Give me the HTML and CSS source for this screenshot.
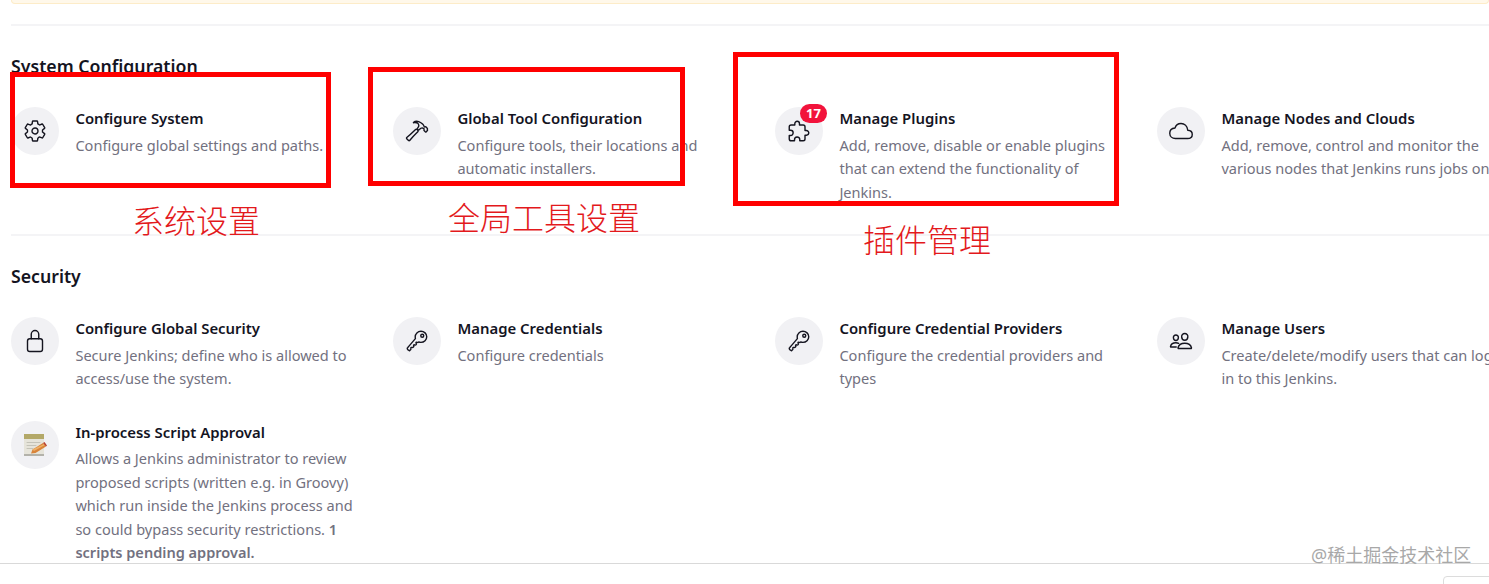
FILE: index.html
```html
<!DOCTYPE html>
<html lang="en">
<head>
    <meta charset="UTF-8">
    <meta name="viewport" content="width=device-width, initial-scale=1.0">
    <title>Manage Jenkins</title>
    <link rel="stylesheet" href="styles.css">
</head>
<body>
    <main class="page">
        <div class="notice"></div>

        <section class="section">
            <h2 class="section-title">System Configuration</h2>
            <div class="tools">
                <a class="tool">
                    <span class="tool-icon">
                        <svg viewBox="0 0 512 512"><path d="M262.29 192.31a64 64 0 1057.4 57.4 64.13 64.13 0 00-57.4-57.4zM416.39 256a154.34 154.34 0 01-1.53 20.79l45.21 35.46a10.81 10.81 0 012.45 13.75l-42.77 74a10.81 10.81 0 01-13.14 4.59l-44.9-18.08a16.11 16.11 0 00-15.17 1.75A164.48 164.48 0 01325 400.8a15.94 15.94 0 00-8.82 12.14l-6.73 47.89a11.08 11.08 0 01-10.68 9.17h-85.54a11.11 11.11 0 01-10.69-8.87l-6.72-47.82a16.07 16.07 0 00-9-12.22 155.3 155.3 0 01-21.46-12.57 16 16 0 00-15.11-1.71l-44.89 18.07a10.81 10.81 0 01-13.14-4.58l-42.77-74a10.8 10.8 0 012.45-13.75l38.21-30a16.05 16.05 0 006-14.08c-.36-4.17-.58-8.33-.58-12.5s.21-8.27.58-12.35a16 16 0 00-6.07-13.94l-38.19-30A10.81 10.81 0 0149.48 186l42.77-74a10.81 10.81 0 0113.14-4.59l44.9 18.08a16.11 16.11 0 0015.17-1.75A164.48 164.48 0 01187 111.2a15.94 15.94 0 008.82-12.14l6.73-47.89A11.08 11.08 0 01213.23 42h85.54a11.11 11.11 0 0110.69 8.87l6.72 47.82a16.07 16.07 0 009 12.22 155.3 155.3 0 0121.46 12.57 16 16 0 0015.11 1.71l44.89-18.07a10.81 10.81 0 0113.14 4.58l42.77 74a10.8 10.8 0 01-2.45 13.75l-38.21 30a16.05 16.05 0 00-6.05 14.08c.33 4.14.55 8.3.55 12.47z"/></svg>
                    </span>
                    <div class="tool-text">
                        <div class="tool-name">Configure System</div>
                        <div class="tool-desc">Configure global settings and paths.</div>
                    </div>
                </a>
                <a class="tool">
                    <span class="tool-icon">
                        <svg viewBox="0 0 512 512"><path d="M277.42 247a24.68 24.68 0 00-4.08-5.47L255 223.44a21.63 21.63 0 00-6.56-4.57 20.93 20.93 0 00-23.28 4.27c-6.36 6.26-18 17.68-39 38.43C146 301.3 71.43 367.89 37.71 396.29a16 16 0 00-1.09 23.54l39 39.43a16.13 16.13 0 0023.67-.89c29.24-34.37 96.3-109 136-148.23 20.39-20.06 31.82-31.58 38.29-37.94a21.76 21.76 0 003.84-25.73z"/><path d="M478 201l-34-34c-3-3-8-3-11 0-4 4-10 5-16 2-12-6-12-24-19-33a243 243 0 00-23-27c-7-7-35-33-82-52a124 124 0 00-47-10c-26 0-47 12-54 19-6 5-12 14-12 14 18-7 32-8 34-5 28 2 47 9 57 17 16 13 23 30 24 53 1 17-15 38-30 55a8 8 0 000 11l21 21a8 8 0 0011 0c14-14 31-28 41-34s18-8 21-8c8-1 15 1 22 5 7 6 16 8 23 14 5 5 5 13 0 20l-1 5c-1 4 1 8 4 11l31 31c3 3 8 3 11 0l29-29c3-3 3-8 0-11z"/></svg>
                    </span>
                    <div class="tool-text">
                        <div class="tool-name">Global Tool Configuration</div>
                        <div class="tool-desc">Configure tools, their locations and automatic installers.</div>
                    </div>
                </a>
                <a class="tool">
                    <span class="tool-icon">
                        <svg viewBox="0 0 512 512"><path d="M413.66 246.1H386a2 2 0 01-2-2v-77.24A38.86 38.86 0 00345.14 128H267.9a2 2 0 01-2-2V98.34c0-27.14-21.5-49.86-48.64-50.33a49.53 49.53 0 00-50.4 49.51V126a2 2 0 01-2 2H87.62A39.74 39.74 0 0048 167.62V238a2 2 0 002 2h26.91c29.37 0 53.68 25.48 54.09 54.85.42 29.87-23.51 57.15-53.29 57.15H50a2 2 0 00-2 2v70.38A39.74 39.74 0 0087.62 464H158a2 2 0 002-2v-20.93c0-30.28 24.75-56.35 55-57.06 30.1-.7 57 20.31 57 50.28V462a2 2 0 002 2h71.14A38.86 38.86 0 00384 425.14v-78a2 2 0 012-2h28.48c27.63 0 49.52-22.67 49.52-50.4s-23.2-48.64-50.34-48.64z"/></svg>
                        <span class="badge">17</span>
                    </span>
                    <div class="tool-text">
                        <div class="tool-name">Manage Plugins</div>
                        <div class="tool-desc">Add, remove, disable or enable plugins that can extend the functionality of Jenkins.</div>
                    </div>
                </a>
                <a class="tool">
                    <span class="tool-icon">
                        <svg viewBox="0 0 512 512"><path d="M400 240c-8.89-89.54-71-144-144-144-69 0-113.44 48.2-128 96-60 6-112 43.59-112 112 0 66 54 112 120 112h260c55 0 100-27.44 100-88 0-59.82-53-85.76-96-88z"/></svg>
                    </span>
                    <div class="tool-text">
                        <div class="tool-name">Manage Nodes and Clouds</div>
                        <div class="tool-desc">Add, remove, control and monitor the various nodes that Jenkins runs jobs on.</div>
                    </div>
                </a>
            </div>
        </section>

        <section class="section">
            <h2 class="section-title">Security</h2>
            <div class="tools">
                <a class="tool">
                    <span class="tool-icon">
                        <svg viewBox="0 0 512 512"><path d="M336 208v-95a80 80 0 00-160 0v95"/><rect x="96" y="208" width="320" height="272" rx="48" ry="48"/></svg>
                    </span>
                    <div class="tool-text">
                        <div class="tool-name">Configure Global Security</div>
                        <div class="tool-desc">Secure Jenkins; define who is allowed to access/use the system.</div>
                    </div>
                </a>
                <a class="tool">
                    <span class="tool-icon">
                        <svg viewBox="0 0 512 512"><path d="M218.1 167.17c0 13 0 25.6 4.1 37.4-43.1 50.6-156.9 184.3-167.5 194.5a20.17 20.17 0 00-6.7 15c0 8.5 5.2 16.7 9.6 21.3 6.6 6.9 34.8 33 40 28 15.4-15 18.5-19 24.8-25.2 9.5-9.3-1-28.3 2.3-36s6.8-9.2 12.5-10.4 15.8 2.9 23.7 3c8.3.1 12.8-3.4 19-9.2 5-4.6 8.6-8.9 8.7-15.6.2-9-12.8-20.9-3.1-30.4s23.7 6.2 34 5 22.8-15.5 24.1-21.6-11.7-21.8-9.7-30.7c.7-3 6.8-10 11.4-11s25 6.9 29.6 5.9c5.6-1.2 12.1-7.1 17.4-10.4 15.5 6.7 29.6 9.4 47.7 9.4 68.5 0 124-53.4 124-119.2S408.5 48 340 48s-121.9 53.37-121.9 119.17zM400 144a32 32 0 11-32-32 32 32 0 0132 32z"/></svg>
                    </span>
                    <div class="tool-text">
                        <div class="tool-name">Manage Credentials</div>
                        <div class="tool-desc">Configure credentials</div>
                    </div>
                </a>
                <a class="tool">
                    <span class="tool-icon">
                        <svg viewBox="0 0 512 512"><path d="M218.1 167.17c0 13 0 25.6 4.1 37.4-43.1 50.6-156.9 184.3-167.5 194.5a20.17 20.17 0 00-6.7 15c0 8.5 5.2 16.7 9.6 21.3 6.6 6.9 34.8 33 40 28 15.4-15 18.5-19 24.8-25.2 9.5-9.3-1-28.3 2.3-36s6.8-9.2 12.5-10.4 15.8 2.9 23.7 3c8.3.1 12.8-3.4 19-9.2 5-4.6 8.6-8.9 8.7-15.6.2-9-12.8-20.9-3.1-30.4s23.7 6.2 34 5 22.8-15.5 24.1-21.6-11.7-21.8-9.7-30.7c.7-3 6.8-10 11.4-11s25 6.9 29.6 5.9c5.6-1.2 12.1-7.1 17.4-10.4 15.5 6.7 29.6 9.4 47.7 9.4 68.5 0 124-53.4 124-119.2S408.5 48 340 48s-121.9 53.37-121.9 119.17zM400 144a32 32 0 11-32-32 32 32 0 0132 32z"/></svg>
                    </span>
                    <div class="tool-text">
                        <div class="tool-name">Configure Credential Providers</div>
                        <div class="tool-desc">Configure the credential providers and types</div>
                    </div>
                </a>
                <a class="tool">
                    <span class="tool-icon">
                        <svg viewBox="0 0 512 512"><path d="M402 168c-2.93 40.67-33.1 72-66 72s-63.12-31.32-66-72c-3-42.31 26.37-72 66-72s69 30.46 66 72z"/><path d="M336 304c-65.17 0-127.84 32.37-143.54 95.41-2.08 8.34 3.15 16.59 11.72 16.59h263.65c8.57 0 13.77-8.25 11.72-16.59C463.85 335.36 401.18 304 336 304z"/><path d="M200 185.94c-2.34 32.48-26.72 58.06-53 58.06s-50.7-25.57-53-58.06C91.61 152.15 115.34 128 147 128s55.39 24.77 53 57.94z"/><path d="M206 306c-18.05-8.27-37.93-11.45-59-11.45-52 0-102.1 25.85-114.65 76.2-1.65 6.66 2.53 13.25 9.37 13.25H154"/></svg>
                    </span>
                    <div class="tool-text">
                        <div class="tool-name">Manage Users</div>
                        <div class="tool-desc">Create/delete/modify users that can log in to this Jenkins.</div>
                    </div>
                </a>
                <a class="tool">
                    <span class="tool-icon">
                        <svg class="notepad" viewBox="0 0 24 24">
                            <rect x="1" y="3" width="20" height="20" fill="#e6e4da"/>
                            <rect x="1" y="21" width="20" height="2" fill="#b3b2aa"/>
                            <rect x="1" y="1" width="20" height="5" fill="#b3a868"/>
                            <path d="M4 9.500h13M4 12.500h9M4 15.500h6" stroke="#c4c3b8" stroke-width="1"/>
                            <path d="M8 20.500l1.500-4L20 10l3 3.500-10.500 6.500z" fill="#d9843a"/>
                            <path d="M9.500 16.500L21 11l1 1-11 6z" fill="#eeb066"/>
                            <path d="M20 10l3 3.500 1-1-2.500-3.500z" fill="#b8402c"/>
                        </svg>
                    </span>
                    <div class="tool-text">
                        <div class="tool-name">In-process Script Approval</div>
                        <div class="tool-desc">Allows a Jenkins administrator to review proposed scripts (written e.g. in Groovy) which run inside the Jenkins process and so could bypass security restrictions. <b>1 scripts pending approval.</b></div>
                    </div>
                </a>
            </div>
        </section>
    </main>

    <footer class="footer"><span class="footer-btn"></span></footer>

    <!-- red annotations drawn over the screenshot -->
    <div class="mark mark-system"></div>
    <div class="mark mark-tools"></div>
    <div class="mark mark-plugins"></div>
    <div class="note note-system">系统设置</div>
    <div class="note note-tools">全局工具设置</div>
    <div class="note note-plugins">插件管理</div>
    <div class="watermark">@稀土掘金技术社区</div>
</body>
</html>
```

FILE: styles.css
```css
body {
    font-family: "Noto Sans", "Noto Sans CJK SC", sans-serif;
    background-color: #fff;
    color: #14141f;
    margin: 0;
    height: 584px;
    width: 1489px;
    overflow: hidden;
    display: flex;
    flex-direction: column;
    position: relative;
}
.page {
    flex: 1;
    min-height: 0;
    overflow: hidden;
    padding: 0 0 0 11px;
}
.notice {
    height: 4px;
    background: #fff8ea;
    border: 1px solid #fdecc8;
    border-top: none;
    border-radius: 0 0 6px 6px;
    box-sizing: border-box;
    margin-bottom: 20px;
}
.section {
    border-top: 2px solid #f4f4f6;
    padding-top: 28px;
    height: 210px;
    box-sizing: border-box;
}
.section + .section {
    height: auto;
}
.section-title {
    font-size: 17.7px;
    font-weight: 600;
    line-height: 24px;
    margin: 0 0 29px;
}
.tools {
    display: grid;
    grid-template-columns: repeat(4, 382px);
    row-gap: 30px;
}
.tool {
    display: flex;
    gap: 16.4px;
    padding-right: 33px;
}
.tool-icon {
    flex: none;
    position: relative;
    width: 48px;
    height: 48px;
    border-radius: 50%;
    background: #f1f1f4;
    display: flex;
    align-items: center;
    justify-content: center;
}
.tool-icon svg {
    width: 24px;
    height: 24px;
    fill: none;
    stroke: #14141f;
    stroke-width: 30;
    stroke-linecap: round;
    stroke-linejoin: round;
}
.tool-icon .notepad {
    stroke: none;
}
.badge {
    position: absolute;
    top: -3px;
    left: 25px;
    min-width: 27px;
    height: 19px;
    border-radius: 10px;
    background: #f2133c;
    color: #fff;
    font-size: 13px;
    font-weight: 700;
    line-height: 19px;
    text-align: center;
}
.tool-name {
    font-size: 14.9px;
    font-weight: 600;
    line-height: 22px;
    margin-bottom: 4.5px;
}
.tool-desc {
    font-size: 14.55px;
    line-height: 23.5px;
    color: #727180;
}
.tool-desc b {
    font-weight: 600;
}
.footer {
    flex: none;
    height: 20px;
    border-top: 1px solid #d9d9d9;
    background: #fff;
    display: flex;
    justify-content: flex-end;
    overflow: hidden;
}
.footer-btn {
    width: 60px;
    height: 20px;
    margin-top: 12px;
    margin-right: -16px;
    border: 1px solid #dcdcdc;
    border-radius: 4px;
    flex: none;
}
.mark {
    position: absolute;
    border: 5px solid #f00;
    box-sizing: border-box;
}
.mark-system {
    left: 10px;
    top: 72px;
    width: 321px;
    height: 116px;
}
.mark-tools {
    left: 368px;
    top: 67px;
    width: 317px;
    height: 119px;
}
.mark-plugins {
    left: 733px;
    top: 52px;
    width: 386px;
    height: 154px;
}
.note {
    position: absolute;
    color: #e3191c;
    font-size: 32px;
    font-weight: 300;
    line-height: 40px;
    white-space: nowrap;
}
.note-system {
    left: 132px;
    top: 201px;
}
.note-tools {
    left: 448px;
    top: 198px;
}
.note-plugins {
    left: 863px;
    top: 220px;
}
.watermark {
    position: absolute;
    left: 1311px;
    top: 543px;
    font-size: 18px;
    line-height: 24px;
    color: #a8a8a8;
    white-space: nowrap;
}
```
